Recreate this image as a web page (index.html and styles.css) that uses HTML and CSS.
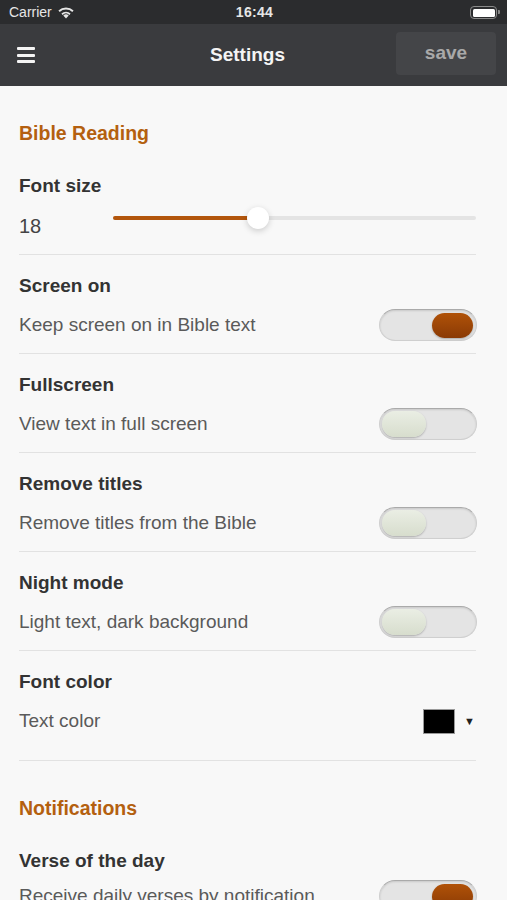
FILE: index.html
```html
<!DOCTYPE html>
<html lang="en">
<head>
  <meta charset="UTF-8" />
  <meta name="viewport" content="width=device-width, initial-scale=1.0"/>
  <title>Settings</title>
  <link rel="stylesheet" href="styles.css">
</head>
<body>
  <div class="status-bar">
    <div class="carrier">
      Carrier
      <svg class="wifi" width="18" height="13" viewBox="0 0 18 13">
        <path d="M9 12.5 L6.3 9.6 A4 4 0 0 1 11.7 9.6 Z" fill="#e6e6e6"/>
        <path d="M4.4 7.6 A6.7 6.7 0 0 1 13.6 7.6 L12.4 8.9 A5 5 0 0 0 5.6 8.9 Z" fill="#e6e6e6"/>
        <path d="M1.4 4.6 A11 11 0 0 1 16.6 4.6 L15.3 5.9 A9.2 9.2 0 0 0 2.7 5.9 Z" fill="#e6e6e6"/>
      </svg>
    </div>
    <div class="clock">16:44</div>
    <div class="battery"><span class="battery-level"></span></div>
  </div>

  <header class="nav-bar">
    <button class="menu-btn" aria-label="menu">
      <span></span><span></span><span></span>
    </button>
    <h1>Settings</h1>
    <button class="save-btn">save</button>
  </header>

  <main class="settings">
    <h2 class="section-title">Bible Reading</h2>

    <div class="row row-first">
      <div class="row-title">Font size</div>
      <div class="row-line">
        <span class="font-value">18</span>
        <div class="slider">
          <div class="slider-fill" style="width: 40%"></div>
          <div class="slider-thumb" style="left: 40%"></div>
        </div>
      </div>
    </div>

    <div class="row">
      <div class="row-title">Screen on</div>
      <div class="row-line">
        <span class="row-sub">Keep screen on in Bible text</span>
        <div class="toggle on"><span class="knob"></span></div>
      </div>
    </div>

    <div class="row">
      <div class="row-title">Fullscreen</div>
      <div class="row-line">
        <span class="row-sub">View text in full screen</span>
        <div class="toggle"><span class="knob"></span></div>
      </div>
    </div>

    <div class="row">
      <div class="row-title">Remove titles</div>
      <div class="row-line">
        <span class="row-sub">Remove titles from the Bible</span>
        <div class="toggle"><span class="knob"></span></div>
      </div>
    </div>

    <div class="row">
      <div class="row-title">Night mode</div>
      <div class="row-line">
        <span class="row-sub">Light text, dark background</span>
        <div class="toggle"><span class="knob"></span></div>
      </div>
    </div>

    <div class="row row-color">
      <div class="row-title">Font color</div>
      <div class="row-line">
        <span class="row-sub">Text color</span>
        <div class="color-pick">
          <span class="swatch"></span>
          <span class="caret">▼</span>
        </div>
      </div>
    </div>

    <h2 class="section-title">Notifications</h2>

    <div class="row row-first">
      <div class="row-title">Verse of the day</div>
      <div class="row-line row-last">
        <span class="row-sub">Receive daily verses by notification</span>
        <div class="toggle on"><span class="knob"></span></div>
      </div>
    </div>
  </main>
</body>
</html>
```

FILE: styles.css
```css
* {
  box-sizing: border-box;
}

body {
  margin: 0;
  font-family: 'Liberation Sans', Arial, sans-serif;
  background: #f8f8f8;
  color: #333;
  height: 900px;
  overflow: hidden;
}

/* status bar */
.status-bar {
  height: 24px;
  background: #2b2c2e;
  color: #e6e6e6;
  display: flex;
  align-items: center;
  justify-content: space-between;
  padding: 0 7px 0 9px;
  font-size: 14px;
}

.carrier {
  flex: 1;
  display: flex;
  align-items: center;
  gap: 5px;
}

.clock {
  font-weight: bold;
  letter-spacing: 0.3px;
}

.battery {
  flex: 1;
  display: flex;
  justify-content: flex-end;
}

.battery::after {
  content: '';
  width: 2px;
  height: 4px;
  background: #888;
  align-self: center;
  margin-left: 1px;
  border-radius: 0 1px 1px 0;
}

.battery-level {
  width: 27px;
  height: 13px;
  border: 1.5px solid #8a8a8a;
  border-radius: 4px;
  background: #fff;
  background-clip: content-box;
  padding: 1.5px;
}

/* navigation bar */
.nav-bar {
  height: 62px;
  background: #3a3b3e;
  display: flex;
  align-items: center;
  justify-content: space-between;
  padding: 0 11px 0 17px;
}

.menu-btn {
  width: 18px;
  height: 16px;
  padding: 0;
  border: none;
  background: none;
  display: flex;
  flex-direction: column;
  justify-content: space-between;
  cursor: pointer;
}

.menu-btn span {
  display: block;
  height: 3px;
  background: #f4f4f4;
  border-radius: 1px;
}

.nav-bar h1 {
  margin: 0 0 0 64px;
  font-size: 19px;
  color: #f4f4f4;
  font-weight: bold;
}

.save-btn {
  width: 100px;
  height: 43px;
  margin-top: -4px;
  border: none;
  border-radius: 4px;
  background: #444548;
  color: #a9a9a9;
  font-family: inherit;
  font-size: 19px;
  font-weight: bold;
  cursor: pointer;
}

/* settings list */
.settings {
  padding: 0 31px 0 19px;
}

.section-title {
  margin: 0;
  padding-top: 35px;
  font-size: 19.5px;
  line-height: 24px;
  color: #b4600f;
  font-weight: bold;
}

.row {
  padding: 19px 0 16px;
  border-bottom: 1px solid #e2e2e2;
}

.row-first {
  padding-top: 29px;
}

.row-title {
  font-size: 19px;
  line-height: 24px;
  font-weight: bold;
  color: #333;
}

.row-line {
  margin-top: 15px;
  height: 24px;
  display: flex;
  align-items: center;
  justify-content: space-between;
}

.row-first .row-line {
  margin-top: 16px;
}

.row-first .row-last {
  margin-top: 11px;
}

.row-sub {
  font-size: 19px;
  line-height: 24px;
  color: #5a5a5a;
}

.font-value {
  width: 94px;
  font-size: 20px;
  line-height: 24px;
  color: #444;
}

.slider {
  flex: 1;
  height: 4px;
  margin-top: -17px;
  background: #e4e4e4;
  border-radius: 2px;
  position: relative;
}

.slider-fill {
  height: 4px;
  background: #b3560c;
  border-radius: 2px;
}

.slider-thumb {
  position: absolute;
  top: -9px;
  width: 22px;
  height: 22px;
  margin-left: -11px;
  background: #fff;
  border-radius: 50%;
  box-shadow: 0 2px 6px rgba(0,0,0,0.18);
}

/* toggle switch */
.toggle {
  flex: none;
  width: 98px;
  height: 32px;
  border-radius: 16px;
  background: #e4e4e4;
  border: 1px solid #cfcfcf;
  border-top-color: #aaa;
  box-shadow: inset 0 1px 2px rgba(0,0,0,0.12);
  display: flex;
  align-items: center;
  padding: 0 2px;
  margin-right: -1px;
}

.knob {
  width: 44px;
  height: 26px;
  border-radius: 13px;
  background: linear-gradient(#eaeee4, #d7ddcd);
  box-shadow: 0 1px 2px rgba(0,0,0,0.25);
}

.toggle.on {
  justify-content: flex-end;
  padding: 0 3px;
}

.toggle.on .knob {
  width: 41px;
  height: 25px;
  background: linear-gradient(#b05208, #8a3a05);
}

.row-color {
  padding-bottom: 27px;
}

.color-pick {
  display: flex;
  align-items: center;
  gap: 9px;
  margin-right: 1px;
}

.swatch {
  width: 32px;
  height: 25px;
  background: #000;
  border: 1px solid #999;
}

.caret {
  font-size: 11px;
  color: #222;
}
```
